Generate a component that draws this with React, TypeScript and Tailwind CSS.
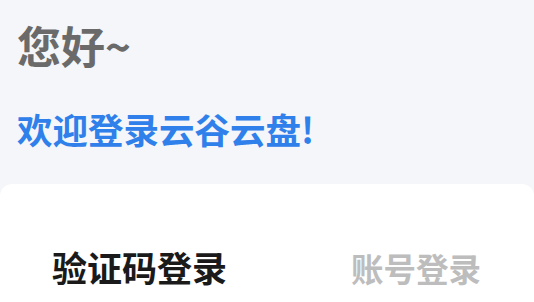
import React from "react";

export default function App() {
  return (
    <div
      className="w-[534px] h-[302px] overflow-hidden bg-[#f5f6f9] flex flex-col"
      style={{ fontFamily: '"Noto Sans CJK SC", "Noto Sans", sans-serif' }}
    >
      <div className="pl-[17px] pt-[21px]">
        <div className="text-[44px] leading-[48px] font-bold text-[#6a6a6a]">您好~</div>
        <div className="mt-[40px] text-[35.5px] leading-[40px] font-bold text-[#2f80ea]">欢迎登录云谷云盘!</div>
      </div>
      <div className="mt-[35px] flex-1 bg-white rounded-t-[12px]">
        <div className="flex items-baseline pt-[63px]">
          <div className="ml-[52px] text-[35px] leading-[40px] font-bold text-[#1a1a1a]">验证码登录</div>
          <div className="ml-[124px] text-[32.5px] leading-[40px] font-bold text-[#bdbdbd]">账号登录</div>
        </div>
      </div>
    </div>
  );
}
